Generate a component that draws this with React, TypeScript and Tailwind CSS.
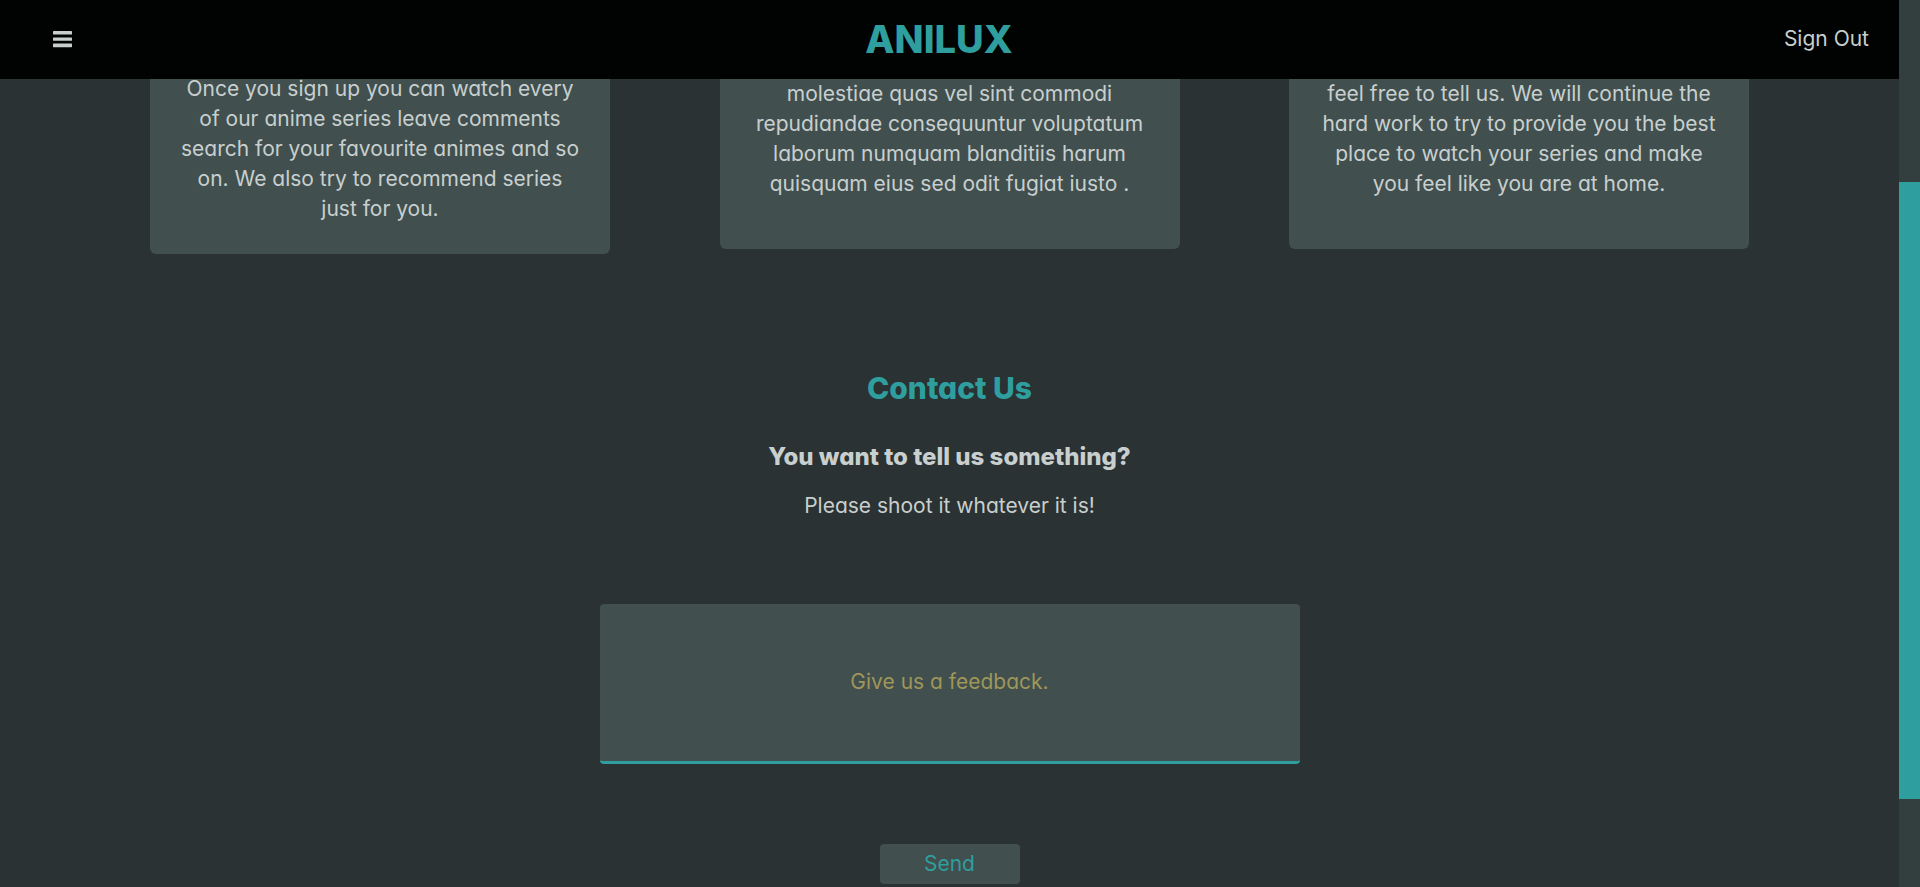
import React from "react";

type Card = { id: string; lines: string[]; className: string };

const cards: Card[] = [
  {
    id: "about",
    className: "pb-[30px]",
    lines: [
      "Once you sign up you can watch every",
      "of our anime series leave comments",
      "search for your favourite animes and so",
      "on. We also try to recommend series",
      "just for you.",
    ],
  },
  {
    id: "story",
    className: "pt-[5px] pb-[50px]",
    lines: [
      "molestiae quas vel sint commodi",
      "repudiandae consequuntur voluptatum",
      "laborum numquam blanditiis harum",
      "quisquam eius sed odit fugiat iusto .",
    ],
  },
  {
    id: "support",
    className: "pt-[5px] pb-[50px]",
    lines: [
      "feel free to tell us. We will continue the",
      "hard work to try to provide you the best",
      "place to watch your series and make",
      "you feel like you are at home.",
    ],
  },
];

function Header() {
  return (
    <header className="z-10 flex h-[79px] shrink-0 items-center justify-between bg-[#010302] pr-[30px] pb-0.5">
      <button type="button" aria-label="Open menu" className="flex h-10 w-[94px] items-center pl-[53px]">
        <svg width="19" height="18" viewBox="0 0 19 18" fill="#c8cfce" aria-hidden="true">
          <rect x="0" y="1" width="19" height="3.6" rx="0.6" />
          <rect x="0" y="7.6" width="19" height="3.2" rx="0.6" />
          <rect x="0" y="13.6" width="19" height="3.6" rx="0.6" />
        </svg>
      </button>
      <h1 className="text-[38px] leading-[60px] font-extrabold text-[#2f9e9e]">ANILUX</h1>
      <a href="#sign-out">Sign Out</a>
    </header>
  );
}

function InfoCards() {
  return (
    <section className="-mt-[5px] flex h-[180px] items-start justify-between px-[150px]">
      {cards.map((card) => (
        <article
          key={card.id}
          className={`w-[460px] rounded-b-md bg-[#414f4e] text-center ${card.className}`}
        >
          <p>
            {card.lines.map((line) => (
              <span key={line} className="block whitespace-nowrap">
                {line}
              </span>
            ))}
          </p>
        </article>
      ))}
    </section>
  );
}

function Contact() {
  return (
    <section className="flex flex-col items-center pt-[112px] text-center">
      <h2 className="text-[30px] leading-[45px] font-extrabold text-[#2f9e9e]">Contact Us</h2>
      <h3 className="mt-7 text-2xl leading-9 font-extrabold">You want to tell us something?</h3>
      <p className="mt-4">Please shoot it whatever it is!</p>
      <form className="mt-[83px] flex w-full flex-col items-center" onSubmit={(e) => e.preventDefault()}>
        <textarea
          aria-label="Feedback"
          placeholder="Give us a feedback."
          className="h-[160px] w-[700px] max-w-full resize-none rounded border-b-[3px] border-[#2f9e9e] bg-[#414f4e] px-5 pt-[63px] text-center outline-none placeholder:text-[#9f965a]"
        />
        <button type="submit" className="mt-20 h-10 w-[140px] rounded bg-[#414f4e] text-[#2f9e9e]">
          Send
        </button>
      </form>
    </section>
  );
}

export default function App() {
  return (
    <div className="flex h-screen overflow-hidden bg-[#2a3233] font-['Inter','Open_Sans',sans-serif] text-[21px] leading-[30px] text-[#c8cfce] [font-feature-settings:'cv11']">
      <div className="flex min-w-0 flex-1 flex-col overflow-hidden">
        <Header />
        <main>
          <InfoCards />
          <Contact />
        </main>
      </div>
      <div className="flex w-[21px] shrink-0 flex-col bg-[#333f3e]" aria-hidden="true">
        <div className="h-[20.5%]" />
        <div className="h-[69.6%] bg-[#2f9e9e]" />
      </div>
    </div>
  );
}
